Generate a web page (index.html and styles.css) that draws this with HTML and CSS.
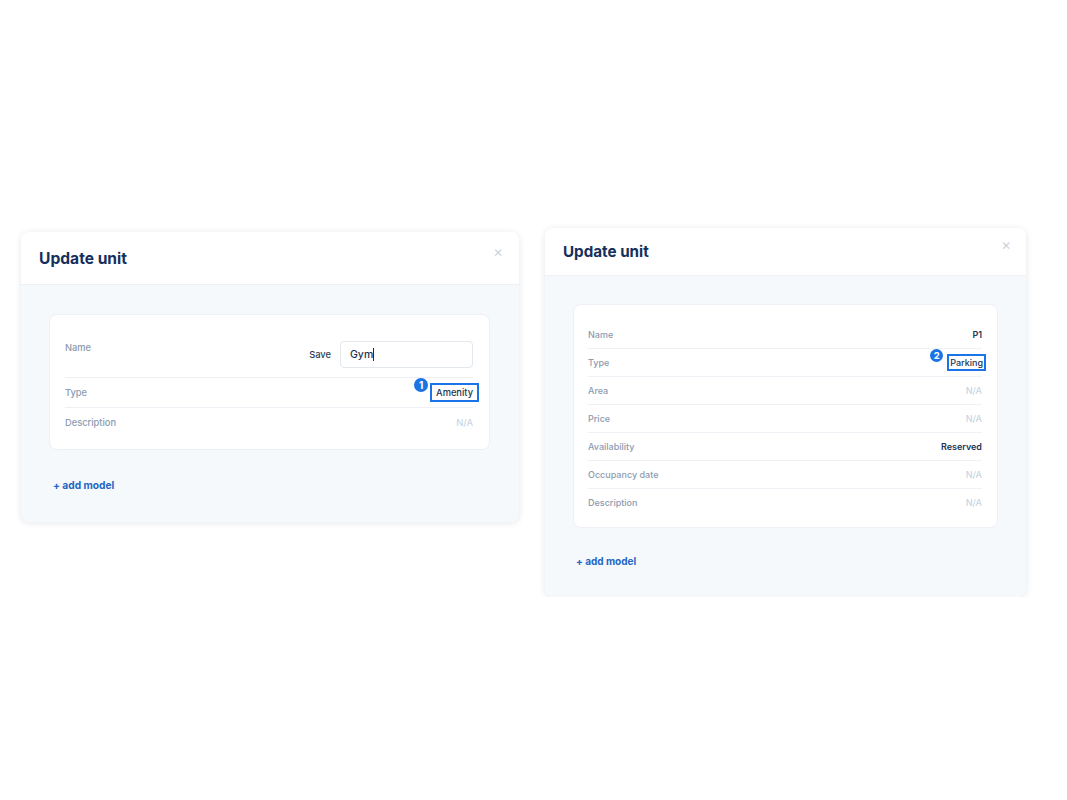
FILE: index.html
```html
<!DOCTYPE html>
<html>
  <head>
    <title>Update unit</title>
    <link rel="stylesheet" href="styles.css">
  </head>
  <body>
    <div class="stage">
      <!-- editing the name of an amenity unit -->
      <div class="modal modal-edit">
        <div class="modal-header">
          <h2>Update unit</h2>
          <span class="close">&times;</span>
        </div>
        <div class="modal-body">
          <div class="details">
            <div class="row row-name">
              <span class="label">Name</span>
              <div class="edit">
                <span class="save">Save</span>
                <div class="input">Gym<span class="caret"></span></div>
              </div>
            </div>
            <div class="row">
              <span class="label">Type</span>
              <span class="value marked">Amenity<span class="badge">1</span></span>
            </div>
            <div class="row">
              <span class="label">Description</span>
              <span class="value empty">N/A</span>
            </div>
          </div>
          <a class="add-model" href="#">+ add model</a>
        </div>
      </div>

      <!-- parking unit details -->
      <div class="modal modal-detail">
        <div class="modal-header">
          <h2>Update unit</h2>
          <span class="close">&times;</span>
        </div>
        <div class="modal-body">
          <div class="details">
            <div class="row">
              <span class="label">Name</span>
              <span class="value">P1</span>
            </div>
            <div class="row">
              <span class="label">Type</span>
              <span class="value marked">Parking<span class="badge">2</span></span>
            </div>
            <div class="row">
              <span class="label">Area</span>
              <span class="value empty">N/A</span>
            </div>
            <div class="row">
              <span class="label">Price</span>
              <span class="value empty">N/A</span>
            </div>
            <div class="row">
              <span class="label">Availability</span>
              <span class="value">Reserved</span>
            </div>
            <div class="row">
              <span class="label">Occupancy date</span>
              <span class="value empty">N/A</span>
            </div>
            <div class="row">
              <span class="label">Description</span>
              <span class="value empty">N/A</span>
            </div>
          </div>
          <a class="add-model" href="#">+ add model</a>
        </div>
      </div>
    </div>
  </body>
</html>
```

FILE: styles.css
```css
body {
  margin: 0;
  background: #fff;
  font-family: Inter, "Noto Sans", sans-serif;
}

.stage {
  display: flex;
  align-items: flex-start;
  gap: 26px;
  padding: 228px 0 0 21px;
}

.modal {
  background: #f6f9fc;
  border-radius: 8px;
  box-shadow: 0 1px 6px rgba(30, 50, 80, 0.12);
  overflow: hidden;
}

.modal-header {
  display: flex;
  justify-content: space-between;
  align-items: center;
  background: #fff;
  border-bottom: 1px solid #edf1f6;
  box-sizing: border-box;
}

.modal-header h2 {
  margin: 0;
  font-size: 15.6px;
  font-weight: 700;
  color: #15305c;
}

.close {
  align-self: flex-start;
  color: #c3cad3;
  font-size: 15px;
  font-weight: 300;
  line-height: 14px;
}

.details {
  background: #fff;
  border: 1px solid #edf1f6;
  border-radius: 8px;
}

.row {
  display: flex;
  justify-content: space-between;
  align-items: center;
  box-sizing: border-box;
  border-top: 1px solid #edf1f6;
}

.row:first-child {
  border-top: 0;
}

.label {
  color: #8c9bb0;
  font-weight: 500;
}

.value {
  position: relative;
  color: #213555;
  font-weight: 600;
}

.value.empty {
  color: #c8d5e4;
  font-weight: 500;
}

/* annotation box + numbered badge */
.value.marked {
  outline: 2px solid #1a73e8;
}

.badge {
  position: absolute;
  width: 14px;
  height: 14px;
  border-radius: 50%;
  background: #1b74e4;
  color: #fff;
  font-size: 10px;
  font-weight: 700;
  line-height: 14px;
  text-align: center;
}

.add-model {
  display: block;
  color: #2467c4;
  font-weight: 700;
  text-decoration: none;
}

/* left modal */
.modal-edit {
  width: 498px;
  margin-top: 4px;
}

.modal-edit .modal-header {
  height: 53px;
  padding: 0 16px 0 18px;
}

.modal-edit .close {
  margin-top: 13px;
}

.modal-edit .modal-body {
  padding: 29px 29px 30px 28px;
}

.modal-edit .details {
  padding: 15px 16px 13px 15px;
  font-size: 9.3px;
}

.modal-edit .row {
  height: 30px;
}

.modal-edit .row:last-child {
  height: 29px;
}

.modal-edit .row-name {
  height: auto;
  align-items: flex-start;
  padding: 11px 0 9px;
}

.row-name .label {
  line-height: 14px;
}

.edit {
  display: flex;
  align-items: center;
}

.save {
  color: #2a3b57;
  font-weight: 500;
  margin-right: 9px;
}

.input {
  display: flex;
  align-items: center;
  width: 133px;
  height: 27px;
  box-sizing: border-box;
  padding: 0 9px;
  border: 1px solid #e3e8ee;
  border-radius: 4px;
  color: #1e2f4d;
  font-size: 10.5px;
  font-weight: 500;
}

.caret {
  display: inline-block;
  width: 1px;
  height: 13px;
  background: #1e2f4d;
}

.modal-edit .value.marked {
  font-weight: 500;
  padding: 0 2px;
  margin-right: -2px;
  outline-offset: 2px;
}

.modal-edit .badge {
  left: -20px;
  top: -9px;
}

.modal-edit .add-model {
  margin: 28px 0 0 4px;
  font-size: 10.2px;
  line-height: 14px;
}

/* right modal */
.modal-detail {
  width: 481px;
}

.modal-detail .modal-header {
  height: 48px;
  padding: 0 15px 0 18px;
}

.modal-detail .modal-header h2 {
  font-size: 15.2px;
}

.modal-detail .close {
  margin-top: 10px;
}

.modal-detail .modal-body {
  padding: 28px 28px 29px 28px;
}

.modal-detail .details {
  padding: 15px 15px 11px 14px;
  font-size: 9px;
}

.modal-detail .row {
  height: 28px;
}

.modal-detail .value.marked {
  font-weight: 500;
  margin-right: -1px;
  outline-offset: 1px;
}

.modal-detail .badge {
  width: 13px;
  height: 13px;
  line-height: 13px;
  font-size: 9.5px;
  left: -20px;
  top: -8px;
}

.modal-detail .add-model {
  margin: 26px 0 0 3px;
  font-size: 10px;
  line-height: 14px;
}
```
